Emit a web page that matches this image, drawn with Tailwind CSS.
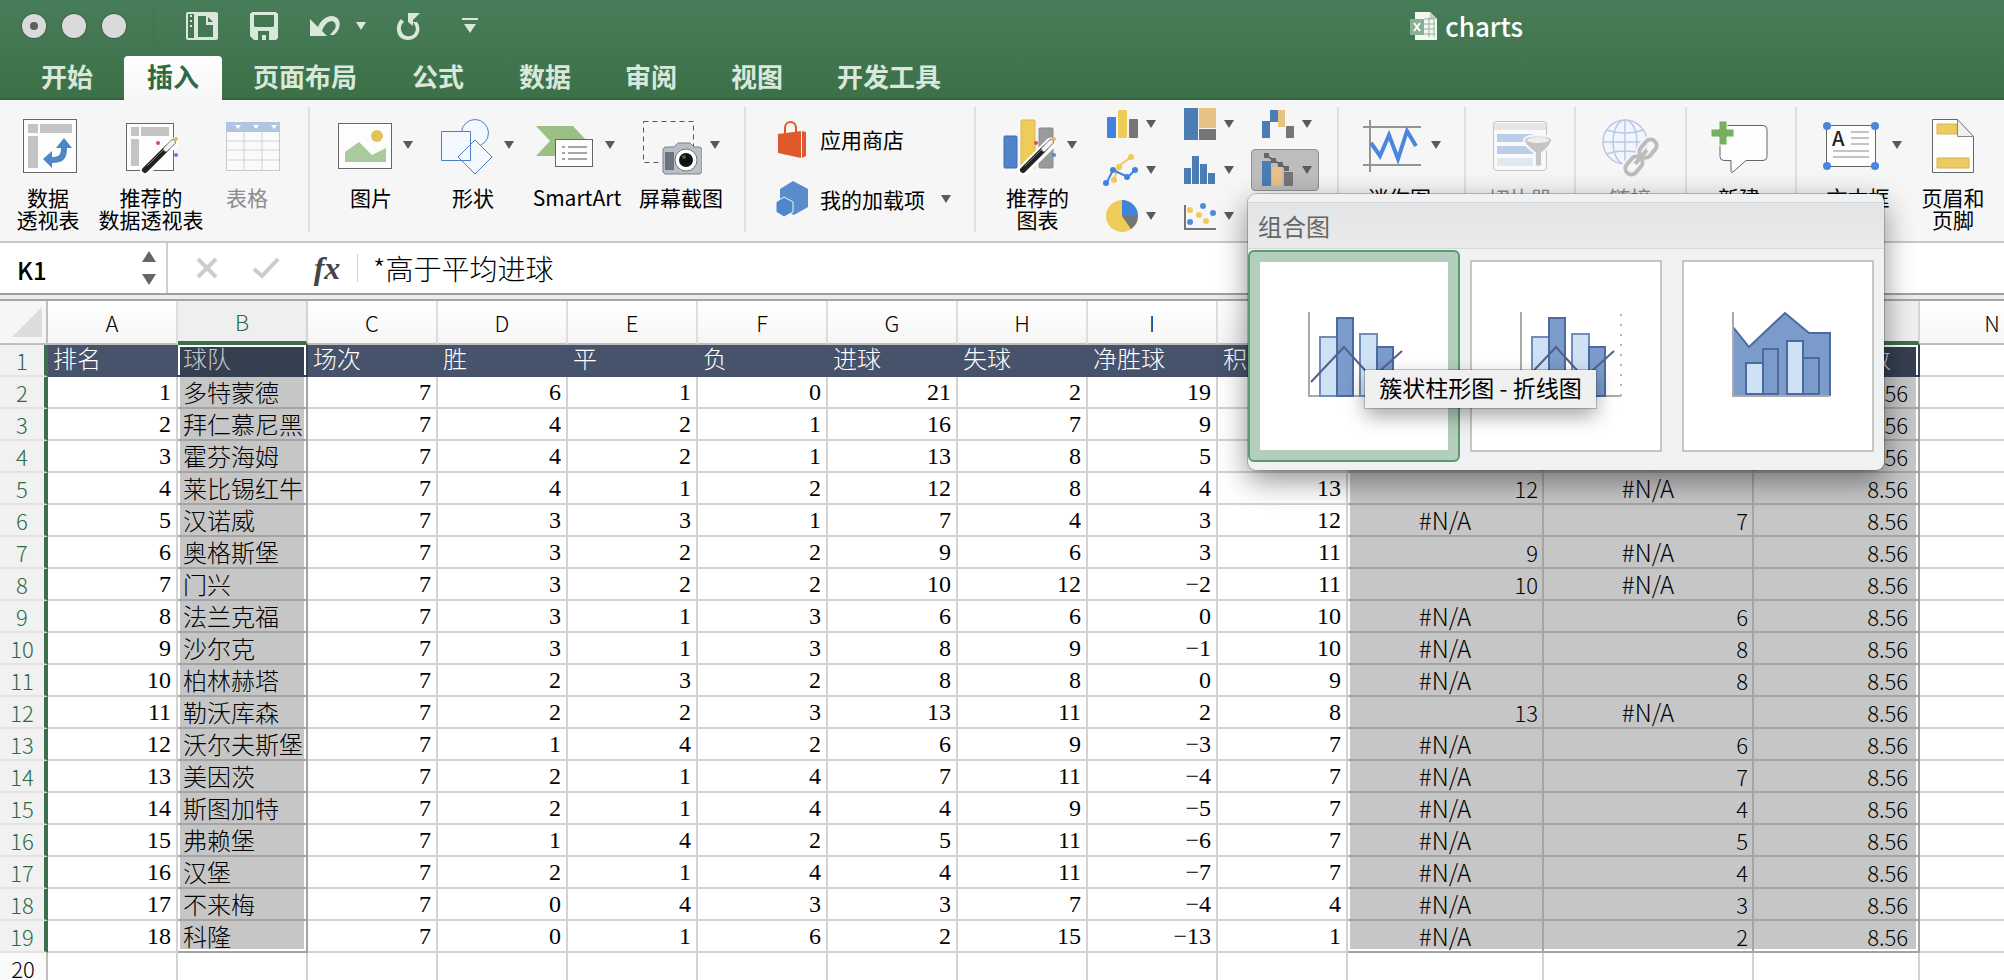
<!doctype html>
<html lang="zh-CN">
<head>
    <meta charset="UTF-8">
    <meta name="viewport" content="width=device-width, initial-scale=1.0">
    <title>charts</title>
    <script src="https://cdn.jsdelivr.net/npm/@tailwindcss/browser@4"></script>
</head>
<body class="flex flex-col h-screen overflow-hidden bg-white text-black font-['Noto_Sans_CJK_SC',sans-serif]">

<!-- shared icon parts -->
<svg class="hidden">
    <symbol id="caret" viewBox="0 0 10 8"><path d="M0 0h10L5 8z" fill="currentColor"/></symbol>
    <symbol id="wand" viewBox="0 0 40 40">
        <path d="M5 36L33 8" stroke="#fff" stroke-width="11" stroke-linecap="round"/>
        <path d="M5 35L27 13" stroke="#222" stroke-width="6" stroke-linecap="round"/>
        <path d="M7 31L24 14" stroke="#777" stroke-width="1"/>
        <path d="M26 14L33 7" stroke="#888" stroke-width="6" stroke-linecap="round"/>
        <path d="M26 14L33 7" stroke="#f4f4f4" stroke-width="4" stroke-linecap="round"/>
        <circle cx="18" cy="8" r="2" fill="#d8486a"/>
        <circle cx="36" cy="4" r="2" fill="#edb652"/>
        <circle cx="36" cy="20" r="2" fill="#5b82d8"/>
    </symbol>
</svg>

<header class="shrink-0 bg-linear-to-b from-[#487d59] to-[#3b7048] border-b-2 border-[#346440]">
    <div class="flex items-center h-[52px] pl-[22px] text-[#d9e8db]">
        <div class="flex gap-4">
            <button aria-label="关闭" class="flex items-center justify-center w-6 h-6 rounded-full bg-[#dadada] ring-1 ring-[#3a6446]"><span class="w-2 h-2 rounded-full bg-[#5e5e5e]"></span></button>
            <button aria-label="最小化" class="w-6 h-6 rounded-full bg-[#dadada] ring-1 ring-[#3a6446]"></button>
            <button aria-label="缩放" class="w-6 h-6 rounded-full bg-[#dadada] ring-1 ring-[#3a6446]"></button>
        </div>
        <div class="w-px h-8 ml-[27px] mr-8 bg-[#40724e]"></div>
        <button aria-label="边栏">
            <svg width="32" height="28" viewBox="0 0 32 28">
                <rect width="32" height="28" rx="2" fill="currentColor"/>
                <path d="M2 2h6v24H2zM12 4h8v9h7v12H12zM22 5l5 5h-5z" fill="#437853"/>
                <path d="M4 3h2v2H4zM4 8h2v2H4zM4 13h2v2H4z" fill="currentColor"/>
            </svg>
        </button>
        <button aria-label="保存" class="ml-8">
            <svg width="28" height="28" viewBox="0 0 28 28">
                <path d="M2 0h24l2 2v24l-2 2H4l-4-4V2z" fill="currentColor"/>
                <path d="M4 3h20v11l-1 1H5l-1-1zM8 19h11v9h-3v-5h-4v5H8z" fill="#437853"/>
            </svg>
        </button>
        <button aria-label="撤消" class="ml-8">
            <svg width="30" height="20" viewBox="0 0 30 20"><path d="M0 3v17h17l-5-5C14 9 18 5 22 5c4 1 5 6 2 9l-4 5h4c8-6 8-18-2-19-6 0-11 4-14 11z" fill="currentColor"/></svg>
        </button>
        <button aria-label="撤消列表" class="ml-4"><svg width="10" height="8"><use href="#caret"/></svg></button>
        <button aria-label="重做" class="ml-[30px]">
            <svg width="24" height="27" viewBox="0 0 24 27"><path d="M5 6C-1 12 0 21 5 25c6 4 16 2 18-6 1-4 0-7-2-10h-4c3 4 4 8 1 12-3 3-8 3-11 0-3-4-3-9 1-12zM12 0h12l-4 4-3 3v6l-5-4z" fill="currentColor"/></svg>
        </button>
        <button aria-label="自定义" class="ml-[42px]">
            <svg width="16" height="16" viewBox="0 0 16 16"><path d="M0 0h16v2H0zM2 6h12l-6 9z" fill="currentColor"/></svg>
        </button>
        <div class="flex items-center gap-2 ml-auto mr-[481px]">
            <svg width="27" height="28" viewBox="0 0 27 28">
                <path d="M5 0h15l7 7v21H5z" fill="#f4f8f4"/>
                <path d="M20 0l7 7h-7z" fill="#b9cfbe"/>
                <path d="M14 7h11M14 12h11M14 17h11M14 22h11M19 5v20M24 8v17" stroke="#8db398" stroke-width="1"/>
                <rect y="7" width="14" height="16" fill="#88b093"/>
                <path d="M4 11l6 8M10 11l-6 8" stroke="#fff" stroke-width="2"/>
            </svg>
            <h1 class="text-[26px] leading-8 font-medium text-white">charts</h1>
        </div>
    </div>
    <nav class="flex gap-2 mt-1 pl-[18px] text-[26px] leading-[38px] font-bold text-[#d9e8db]">
        <button class="h-[42px] px-[23px] pb-0.5">开始</button>
        <button class="h-11 -mb-0.5 px-[23px] pb-1 rounded-t bg-linear-to-b from-white to-[#f6f6f6] text-[#2c6a44]">插入</button>
        <button class="h-[42px] px-[23px] pb-0.5">页面布局</button>
        <button class="h-[42px] px-6 pb-0.5">公式</button>
        <button class="h-[42px] px-[23px] pb-0.5">数据</button>
        <button class="h-[42px] px-[23px] pb-0.5">审阅</button>
        <button class="h-[42px] px-[23px] pb-0.5">视图</button>
        <button class="h-[42px] px-[23px] pb-0.5">开发工具</button>
    </nav>
</header>

<!-- ribbon -->
<div class="flex shrink-0 h-[141px] pt-[7px] pb-[9px] bg-[#f6f6f6] text-[21px] leading-[22px] text-[#5a5a5a]">
    <div class="flex shrink-0 w-[310px] pl-2 border-r-2 border-[#e0e0e0]">
        <button class="flex flex-col items-center w-20 pt-3">
            <svg class="mb-[11px] ml-1" width="54" height="56" viewBox="0 0 54 56">
                <rect x=".5" y=".5" width="53" height="53" fill="#fdfdfd" stroke="#666"/>
                <path d="M5 5h10v9H5zM17 5h32v9H17zM5 17h10v32H5z" fill="#c4c4c4"/>
                <path d="M41 19l8 10h-5c0 10-3 15-15 15v5l-9-9 9-8v6c7 0 9-2 9-9h-5z" fill="#4f86c6"/>
            </svg>
            <span class="text-black">数据<br>透视表</span>
        </button>
        <button class="flex flex-col items-center w-[126px] pt-3">
            <svg class="mb-[11px] ml-1" width="56" height="56" viewBox="0 0 56 56">
                <rect x="1.500" y="4.500" width="47" height="47" fill="#fdfdfd" stroke="#666"/>
                <path d="M6 8h8v9H6zM16 8h28v9H16zM6 20h8v27H6z" fill="#c4c4c4"/>
                <use href="#wand" x="15" y="16" width="40" height="40"/>
            </svg>
            <span class="text-black whitespace-nowrap">推荐的<br>数据透视表</span>
        </button>
        <button disabled class="flex flex-col items-center w-[66px] pt-3">
            <svg class="mb-[11px] ml-3" width="54" height="56" viewBox="0 0 54 56">
                <rect x=".5" y="3.500" width="53" height="48" fill="#fafafa" stroke="#c6c9cf"/>
                <path d="M0 3h54v10H0z" fill="#afc5e2"/>
                <path d="M9 6h6l-3 4zM27 6h6l-3 4zM45 6h6l-3 4z" fill="#fff"/>
                <path d="M1 22h52M1 31h52M1 41h52M18 13v38M36 13v38" stroke="#d0d2d6"/>
            </svg>
            <span class="text-[#8c8c8c]">表格</span>
        </button>
    </div>

    <div class="flex shrink-0 w-[436px] pl-3 border-r-2 border-[#e0e0e0]">
        <button class="flex flex-col items-center w-[102px] pt-3">
            <span class="flex items-center gap-[11px] h-14 mb-[11px] ml-1">
                <svg width="54" height="56" viewBox="0 0 54 56">
                    <rect x=".5" y="4.500" width="53" height="45" fill="#fdfdfd" stroke="#666"/>
                    <circle cx="39" cy="17" r="6" fill="#e5c257"/>
                    <path d="M7 43V33l14-10 13 13 14-7v14z" fill="#a9ca9b"/>
                </svg>
                <svg class="mb-1" width="10" height="8"><use href="#caret"/></svg>
            </span>
            <span class="mr-1 text-black">图片</span>
        </button>
        <button class="flex flex-col items-center w-[102px] pt-3">
            <span class="flex items-center gap-2.5 h-14 mb-[11px] ml-1">
                <svg width="54" height="56" viewBox="0 0 54 56" fill="#f3f8fe" stroke="#4d7fc9">
                    <circle cx="35" cy="14" r="13.500"/>
                    <path d="M1.500 12.500h29v29h-29zM35 21l17 17-17 17-17-17z"/>
                </svg>
                <svg class="mb-1" width="10" height="8"><use href="#caret"/></svg>
            </span>
            <span class="mr-1 text-black">形状</span>
        </button>
        <button class="flex flex-col items-center w-[102px] pt-3">
            <span class="flex items-center gap-3 h-14 mb-[11px] mr-1">
                <svg width="58" height="56" viewBox="0 0 58 56">
                    <path d="M1 7h37l14 15-14 15H1l14-15z" fill="#9bbf84"/>
                    <rect x="20.500" y="20.500" width="37" height="27" fill="#fdfdfd" stroke="#666"/>
                    <path d="M27 28h3M33 28h19M27 34h3M33 34h19M27 40h3M33 40h19" stroke="#a5a5a5" stroke-width="2"/>
                </svg>
                <svg class="mb-1" width="10" height="8"><use href="#caret"/></svg>
            </span>
            <span class="text-black">SmartArt</span>
        </button>
        <button class="flex flex-col items-center w-[106px] pt-3">
            <span class="flex items-center gap-2 h-14 mb-[11px]">
                <svg width="60" height="56" viewBox="0 0 60 56">
                    <rect x="1.500" y="2.500" width="50" height="41" fill="none" stroke="#555" stroke-dasharray="5 4"/>
                    <path d="M23 28h9l4-4h12l4 4h6l2 2v23l-2 2H23l-2-2V30z" fill="#b9bdc6" stroke="#7b808c"/>
                    <path d="M23 33h9v18h-9z" fill="#6c7282"/>
                    <circle cx="44" cy="41" r="11" fill="#fff" stroke="#777"/>
                    <circle cx="44" cy="41" r="7" fill="#111"/>
                    <circle cx="42" cy="38" r="2" fill="#555"/>
                </svg>
                <svg class="mb-1" width="10" height="8"><use href="#caret"/></svg>
            </span>
            <span class="text-black whitespace-nowrap">屏幕截图</span>
        </button>
    </div>

    <div class="flex flex-col shrink-0 w-[230px] pl-[30px] pt-0.5 border-r-2 border-[#e0e0e0]">
        <button class="flex items-center gap-3 h-[60px]">
            <svg width="32" height="38" viewBox="0 0 32 38">
                <path d="M9 14V8c0-8 11-8 11 0v6" fill="none" stroke="#e0572a" stroke-width="2"/>
                <path d="M2 14l23-3v27L2 33z" fill="#e0592b"/>
                <path d="M26 11l4 1v24l-4 2z" fill="#e0592b"/>
            </svg>
            <span class="text-black">应用商店</span>
        </button>
        <button class="flex items-center gap-3 h-[60px]">
            <svg width="32" height="36" viewBox="0 0 32 36">
                <path d="M17 0l15 8v18l-14 8-14-8V8z" fill="#5a8ccb"/>
                <path d="M8 16l9 5v10l-9 5-8-5V21z" fill="#4f86cc" stroke="#f6f6f6" stroke-width="1"/>
            </svg>
            <span class="text-black">我的加载项</span>
            <svg class="ml-1" width="10" height="8"><use href="#caret"/></svg>
        </button>
    </div>

    <div class="flex shrink-0 w-[363px] pl-3 border-r-2 border-[#e0e0e0]">
        <button class="flex flex-col items-center w-[107px] pt-3">
            <span class="flex items-center gap-2.5 h-14 mb-[11px] mr-1">
                <svg width="54" height="56" viewBox="0 0 54 56">
                    <rect x="1" y="17" width="13" height="32" rx="1" fill="#4f84cb" stroke="#3f6fb5"/>
                    <rect x="18" y="1" width="14" height="48" rx="1" fill="#efcb5a" stroke="#dcb748"/>
                    <rect x="36" y="9" width="14" height="40" rx="1" fill="#9a9a9a" stroke="#8b8b8b"/>
                    <use href="#wand" x="15" y="16" width="40" height="40"/>
                </svg>
                <svg class="mb-1" width="10" height="8"><use href="#caret"/></svg>
            </span>
            <span class="mr-2 text-black">推荐的<br>图表</span>
        </button>
        <div class="grid grid-cols-[68px_68px_68px] gap-x-2.5 gap-y-1 self-center">
            <button aria-label="柱形图" class="flex items-center gap-2 h-[42px] pl-[11px]">
                <svg width="32" height="32" viewBox="0 0 32 32"><rect x="1" y="9" width="9" height="21" rx="1" fill="#3f83de"/><rect x="12" y="2" width="9" height="28" rx="1" fill="#efcb5a"/><rect x="23" y="11" width="9" height="19" rx="1" fill="#757575"/></svg>
                <svg width="10" height="8"><use href="#caret"/></svg>
            </button>
            <button aria-label="层次结构图" class="flex items-center gap-2 h-[42px] pl-[11px]">
                <svg width="32" height="32" viewBox="0 0 32 32"><path d="M0 0h14v32H0z" fill="#4b7cb3"/><path d="M15 0h17v20H15z" fill="#e8c285"/><path d="M15 21h17v11H15z" fill="#757575"/></svg>
                <svg width="10" height="8"><use href="#caret"/></svg>
            </button>
            <button aria-label="瀑布图" class="flex items-center gap-2 h-[42px] pl-[11px]">
                <svg width="32" height="32" viewBox="0 0 32 32"><path d="M0 13h8v17H0zM8 2h8v12H8z" fill="#4b7cb3"/><path d="M16 2h7v17h-7z" fill="#e8c285"/><path d="M24 18h8v12h-8z" fill="#757575"/></svg>
                <svg width="10" height="8"><use href="#caret"/></svg>
            </button>
            <button aria-label="折线图" class="flex items-center gap-2 h-[42px] pl-[8px]">
                <svg width="35" height="32" viewBox="0 0 35 32"><path d="M11 25l5-13L28 3" fill="none" stroke="#efcb5a" stroke-width="2"/><g fill="#efcb5a"><circle cx="11" cy="26" r="3"/><circle cx="16" cy="13" r="3"/><circle cx="28" cy="3" r="3"/></g><path d="M3 30l7-14 15 7 8-8" fill="none" stroke="#3f83de" stroke-width="2"/><g fill="#3f83de"><circle cx="3" cy="29" r="3"/><circle cx="10" cy="16" r="3"/><circle cx="24" cy="23" r="3"/><circle cx="32" cy="16" r="3"/></g></svg>
                <svg width="10" height="8"><use href="#caret"/></svg>
            </button>
            <button aria-label="统计图" class="flex items-center gap-2 h-[42px] pl-[11px]">
                <svg width="32" height="32" viewBox="0 0 32 32"><path d="M0 14h7v16H0zM8 2h7v28H8zM16 10h7v20h-7zM24 19h7v11h-7z" fill="#4b7cb3"/></svg>
                <svg width="10" height="8"><use href="#caret"/></svg>
            </button>
            <div class="relative">
                <button aria-label="组合图" class="flex items-center gap-2 w-[68px] h-[42px] pl-2.5 rounded border border-[#909090] bg-[#bdbdbd]">
                    <svg width="32" height="34" viewBox="0 0 32 34"><path d="M0 8h9v25H0z" fill="#4b7cb3"/><path d="M10 14h10v19H10z" fill="#e8c285"/><path d="M22 19h9v14h-9z" fill="#757575"/><path d="M5 3l19 12" fill="none" stroke="#666" stroke-width="2"/><path d="M2 0h5v5H2zM9 5h5v5H9zM16 9h5v5h-5zM22 13h5v5h-5z" fill="#666"/></svg>
                    <svg width="10" height="8"><use href="#caret"/></svg>
                </button>

                <!-- combo chart gallery -->
                <div class="absolute z-20 left-[-3px] top-[45px] w-[636px] h-[276px] pt-2 rounded-lg bg-[#eff1f2] ring-1 ring-black/20 shadow-[0_10px_30px_rgba(0,0,0,0.45)]">
                    <h2 class="h-[47px] pl-2.5 border-y border-[#d6d8d9] bg-linear-to-b from-[#e2e4e5] to-[#e9eaeb] text-2xl leading-[46px] text-[#666]">组合图</h2>
                    <div class="flex mt-px">
                        <button aria-label="簇状柱形图 - 折线图" class="w-[212px] h-[212px] p-2.5 rounded-md border-2 border-[#5b9a6c] bg-[#b4cebe]">
                            <span class="flex items-center justify-center h-full pb-1 bg-white">
                                <svg class="overflow-visible" width="92" height="88" viewBox="0 0 92 88">
                                    <path d="M1 2v84h93" fill="none" stroke="#aaa" stroke-width="2"/>
                                    <path d="M12 27h17v59H12zM52 24h17v62H52z" fill="#cfe2f5" stroke="#6f8db8" stroke-width="2"/>
                                    <path d="M29 8h16v78H29zM69 37h16v49H69z" fill="#7b9bcb" stroke="#4c69a0" stroke-width="2"/>
                                    <path d="M3 72l33-35 28 31 30-27" fill="none" stroke="#525f90" stroke-width="2"/>
                                </svg>
                            </span>
                        </button>
                        <button aria-label="簇状柱形图 - 次坐标轴上的折线图" class="w-[212px] h-[212px] p-2.5">
                            <span class="flex items-center justify-center h-full pb-1 border-2 border-[#c6c6c6] bg-white">
                                <svg class="overflow-visible" width="92" height="88" viewBox="0 0 92 88">
                                    <path d="M1 2v84h100" fill="none" stroke="#aaa" stroke-width="2"/>
                                    <path d="M101 4v82" stroke="#b5b5b5" stroke-width="2" stroke-dasharray="2 8"/>
                                    <path d="M12 27h17v59H12zM52 24h17v62H52z" fill="#cfe2f5" stroke="#6f8db8" stroke-width="2"/>
                                    <path d="M29 8h16v78H29zM69 37h16v49H69z" fill="#7b9bcb" stroke="#4c69a0" stroke-width="2"/>
                                    <path d="M3 72l33-35 28 31 30-27" fill="none" stroke="#525f90" stroke-width="2"/>
                                </svg>
                            </span>
                        </button>
                        <button aria-label="堆积面积图 - 簇状柱形图" class="w-[212px] h-[212px] p-2.5">
                            <span class="flex items-center justify-center h-full pb-1 border-2 border-[#c6c6c6] bg-white">
                                <svg class="overflow-visible" width="92" height="88" viewBox="0 0 92 88">
                                    <path d="M1 17l16 20L53 3l24 20h21v63H1z" fill="#7b9bcb"/>
                                    <path d="M1 17l16 20L53 3l24 20h21v63" fill="none" stroke="#4c69a0" stroke-width="2"/>
                                    <path d="M1 2v84h97" fill="none" stroke="#aaa" stroke-width="2"/>
                                    <path d="M14 53h17v31H14zM55 31h16v53H55z" fill="#cfe2f5" stroke="#4c69a0" stroke-width="2"/>
                                    <path d="M31 39h15v45H31zM71 48h16v36H71z" fill="#7b9bcb" stroke="#4c69a0" stroke-width="2"/>
                                </svg>
                            </span>
                        </button>
                    </div>
                    <div role="tooltip" class="absolute left-[117px] top-44 w-[231px] h-[38px] bg-[#f0f0f0] ring-1 ring-black/20 shadow-[0_8px_20px_rgba(0,0,0,0.35)] text-center text-[23px] leading-[34px] text-black whitespace-nowrap">簇状柱形图 - 折线图</div>
                </div>
            </div>
            <button aria-label="饼图" class="flex items-center gap-2 h-[42px] pl-[11px]">
                <svg width="32" height="32" viewBox="0 0 32 32"><circle cx="16" cy="16" r="16" fill="#efcb5a"/><path d="M16 16V0a16 16 0 0 1 16 16z" fill="#3f83de"/><path d="M16 16h16a16 16 0 0 1-7 13z" fill="#757575"/></svg>
                <svg width="10" height="8"><use href="#caret"/></svg>
            </button>
            <button aria-label="散点图" class="flex items-center gap-2 h-[42px] pl-[11px]">
                <svg width="32" height="32" viewBox="0 0 32 32"><path d="M1 5v24h31" fill="none" stroke="#757575" stroke-width="2"/><g fill="#efcb5a"><circle cx="6" cy="10" r="3"/><circle cx="15" cy="15" r="3"/><circle cx="22" cy="21" r="3"/></g><g fill="#4f8bd8"><circle cx="19" cy="6" r="3"/><circle cx="29" cy="13" r="3"/><circle cx="6" cy="22" r="3"/></g></svg>
                <svg width="10" height="8"><use href="#caret"/></svg>
            </button>
        </div>
    </div>

    <div class="flex justify-center shrink-0 w-[127px] border-r-2 border-[#e0e0e0]">
        <button class="flex flex-col items-center pt-3">
            <span class="flex items-center gap-2.5 h-14 mb-[11px]">
                <svg width="58" height="56" viewBox="0 0 58 56" fill="none"><path d="M7 1v52M0 8h58M0 46h58" stroke="#949494" stroke-width="2"/><path d="M8 24l9 13 9-21 9 24 9-28 9 15" stroke="#4a86dc" stroke-width="4"/></svg>
                <svg class="mb-1" width="10" height="8"><use href="#caret"/></svg>
            </span>
            <span class="mr-1 text-black">迷你图</span>
        </button>
    </div>
    <div class="flex justify-center shrink-0 w-[110px] border-r-2 border-[#e0e0e0]">
        <button disabled class="flex flex-col items-center pt-3">
            <svg class="mb-[11px] ml-1" width="60" height="56" viewBox="0 0 60 56">
                <rect x="1.500" y="2.500" width="53" height="49" rx="3" fill="#fafafa" stroke="#c4c4c4"/>
                <path d="M2 4h52v7H2z" fill="#e6e6e6"/>
                <path d="M5 15h36v8H5zM5 27h36v8H5z" fill="#b9cfe8"/>
                <path d="M5 39h36v8H5z" fill="#e1e8f0"/>
                <path d="M32 21c0-6 28-6 28 0 0 5-5 9-10 13v12c0 2-7 2-7 0V34c-5-4-11-8-11-13z" fill="#c5c5c5" stroke="#f6f6f6" stroke-width="2"/>
                <ellipse cx="46" cy="21" rx="11" ry="3" fill="#eee"/>
            </svg>
            <span class="text-[#8c8c8c]">切片器</span>
        </button>
    </div>
    <div class="flex justify-center shrink-0 w-[111px] border-r-2 border-[#e0e0e0]">
        <button disabled class="flex flex-col items-center pt-3">
            <svg class="mb-[9px]" width="58" height="58" viewBox="0 0 58 58" fill="none">
                <g stroke="#bcc7e4" stroke-width="1.500"><circle cx="23" cy="23" r="22" fill="#f1f5fc"/><ellipse cx="23" cy="23" rx="12" ry="22"/><path d="M23 1v44M1 23h44M5 11c10 4 26 4 36 0M5 35c10-4 26-4 36 0"/></g>
                <g transform="rotate(-50 39 38)" stroke="#f6f6f6" stroke-width="8"><rect x="18" y="32" width="20" height="12" rx="6"/><rect x="40" y="32" width="20" height="12" rx="6"/></g>
                <g transform="rotate(-50 39 38)" stroke="#bcbcbc" stroke-width="4"><rect x="18" y="32" width="20" height="12" rx="6"/><rect x="40" y="32" width="20" height="12" rx="6"/><path d="M30 38h18"/></g>
            </svg>
            <span class="text-[#8c8c8c]">链接</span>
        </button>
    </div>
    <div class="flex justify-center shrink-0 w-[110px] border-r-2 border-[#e0e0e0]">
        <button class="flex flex-col items-center pt-3">
            <svg class="mb-[11px] mr-1" width="58" height="56" viewBox="0 0 58 56">
                <path d="M14 6.500h39q4 0 4 4v27q0 4-4 4H36L23 53q-2 1-2-1V41.500h-7q-4 0-4-4v-27q0-4 4-4z" fill="#fdfdfd" stroke="#666"/>
                <path d="M9 2h8v8h7v8h-7v8H9v-8H1v-8h8z" fill="#74b05d" stroke="#f6f6f6"/>
            </svg>
            <span class="mr-1 text-black">新建</span>
        </button>
    </div>
    <div class="flex shrink-0 pl-[9px]">
        <button class="flex flex-col items-center w-28 pt-3">
            <span class="flex items-center gap-3 h-14 mb-[11px]">
                <svg width="58" height="56" viewBox="0 0 58 56">
                    <rect x="4.500" y="6.500" width="49" height="41" fill="#fdfdfd" stroke="#666"/>
                    <path d="M29 13h18M29 19h18M29 25h18M11 32h36M11 38h36" stroke="#c4c4c4" stroke-width="2"/>
                    <text x="10" y="27" font-size="20" font-weight="500" fill="#222">A</text>
                    <g fill="#4a86dc"><circle cx="5" cy="7" r="4"/><circle cx="53" cy="7" r="4"/><circle cx="5" cy="47" r="4"/><circle cx="53" cy="47" r="4"/></g>
                </svg>
                <svg class="mb-1" width="10" height="8"><use href="#caret"/></svg>
            </span>
            <span class="mr-2 text-black">文本框</span>
        </button>
        <button class="flex flex-col items-center w-[70px] pt-3">
            <svg class="mb-[11px]" width="42" height="56" viewBox="0 0 42 56">
                <path d="M.5.500h25l16 17v36H.500z" fill="#fdfdfd" stroke="#666"/>
                <path d="M5 5h20v10H5zM5 39h32v10H5z" fill="#eccb62" stroke="#d9b44a"/>
                <path d="M25.500.500v17h16z" fill="#f0f0f0" stroke="#888"/>
            </svg>
            <span class="text-black">页眉和<br>页脚</span>
        </button>
    </div>
</div>

<!-- formula bar -->
<div class="flex items-center shrink-0 h-[54px] border-y-2 border-t-[#c8c8c8] border-b-[#a0a0a0] bg-white">
    <div class="flex items-center w-[168px] h-full pl-[17px] border-r-2 border-[#cfcfcf]">
        <input aria-label="名称框" value="K1" class="w-[125px] pt-1 text-2xl font-medium outline-none">
        <svg width="14" height="34" viewBox="0 0 14 34"><path d="M7 0l7 11H0zM7 34l7-11H0z" fill="#666"/></svg>
    </div>
    <button aria-label="取消" class="ml-7"><svg width="22" height="22" viewBox="0 0 22 22"><path d="M2 2l18 18M20 2L2 20" stroke="#ccc" stroke-width="4"/></svg></button>
    <button aria-label="输入" class="ml-[34px]"><svg width="28" height="22" viewBox="0 0 28 22"><path d="M2 12l8 7L26 2" fill="none" stroke="#ccc" stroke-width="4"/></svg></button>
    <button aria-label="插入函数" class="w-[30px] h-10 ml-8 font-['Liberation_Serif',serif] italic font-bold text-[32px] leading-9 text-[#444]">fx</button>
    <div class="w-px h-7 mx-[15px] bg-[#d5d5d5]"></div>
    <input aria-label="编辑栏" value="*高于平均进球" class="flex-1 font-light text-[28px] outline-none">
</div>
<div class="shrink-0 h-1.5 bg-[#ececec] border-b-2 border-[#a6a6a6]"></div>

<!-- sheet -->
<main class="flex-1 overflow-hidden">
    <table class="table-fixed w-[2066px] min-w-full border-separate border-spacing-0">
        <colgroup>
            <col class="w-12">
            <col class="w-[130px]"><col class="w-[130px]"><col class="w-[130px]"><col class="w-[130px]"><col class="w-[130px]">
            <col class="w-[130px]"><col class="w-[130px]"><col class="w-[130px]"><col class="w-[130px]"><col class="w-[130px]">
            <col class="w-[196px]"><col class="w-[210px]"><col class="w-[166px]"><col>
        </colgroup>
        <thead><tr id="letters"></tr></thead>
        <tbody id="rows"></tbody>
    </table>
</main>

<script>
    var letters = 'ABCDEFGHIJKLMN'.split('');
    var titles = ['排名', '球队', '场次', '胜', '平', '负', '进球', '失球', '净胜球', '积分', '*高于平均进球', '*低于平均进球', '*平均进球数', ''];
    // team, won, drawn, lost, goals for, goals against, points
    var teams = [
        ['多特蒙德', 6, 1, 0, 21, 2, 19],
        ['拜仁慕尼黑', 4, 2, 1, 16, 7, 14],
        ['霍芬海姆', 4, 2, 1, 13, 8, 14],
        ['莱比锡红牛', 4, 1, 2, 12, 8, 13],
        ['汉诺威', 3, 3, 1, 7, 4, 12],
        ['奥格斯堡', 3, 2, 2, 9, 6, 11],
        ['门兴', 3, 2, 2, 10, 12, 11],
        ['法兰克福', 3, 1, 3, 6, 6, 10],
        ['沙尔克', 3, 1, 3, 8, 9, 10],
        ['柏林赫塔', 2, 3, 2, 8, 8, 9],
        ['勒沃库森', 2, 2, 3, 13, 11, 8],
        ['沃尔夫斯堡', 1, 4, 2, 6, 9, 7],
        ['美因茨', 2, 1, 4, 7, 11, 7],
        ['斯图加特', 2, 1, 4, 4, 9, 7],
        ['弗赖堡', 1, 4, 2, 5, 11, 7],
        ['汉堡', 2, 1, 4, 4, 11, 7],
        ['不来梅', 0, 4, 3, 3, 7, 4],
        ['科隆', 0, 1, 6, 2, 15, 1]
    ];
    var average = 8.56;

    function selected(c) {
        return c === 1 || (c >= 10 && c <= 12);
    }

    // white inner frame of the two selected ranges
    function frame(c, r) {
        var left = c === 1 || c === 10, right = c === 1 || c === 12;
        if (r === 1 && left && right) return ' shadow-[inset_2px_0_0_#fff,inset_-2px_0_0_#fff,inset_0_2px_0_#fff]';
        if (r === 1 && left) return ' shadow-[inset_2px_0_0_#fff,inset_0_2px_0_#fff]';
        if (r === 1 && right) return ' shadow-[inset_-2px_0_0_#fff,inset_0_2px_0_#fff]';
        if (r === 1) return ' shadow-[inset_0_2px_0_#fff]';
        if (r === 19 && left && right) return ' shadow-[inset_2px_0_0_#fff,inset_-2px_0_0_#fff,inset_0_-2px_0_#fff]';
        if (r === 19 && left) return ' shadow-[inset_2px_0_0_#fff,inset_0_-2px_0_#fff]';
        if (r === 19 && right) return ' shadow-[inset_-2px_0_0_#fff,inset_0_-2px_0_#fff]';
        if (r === 19) return ' shadow-[inset_0_-2px_0_#fff]';
        if (left && right) return ' shadow-[inset_2px_0_0_#fff,inset_-2px_0_0_#fff]';
        if (left) return ' shadow-[inset_2px_0_0_#fff]';
        if (right) return ' shadow-[inset_-2px_0_0_#fff]';
        return '';
    }

    var base = 'h-8 p-0 border-r-2 border-b-2 whitespace-nowrap leading-[30px]';

    var head = '<td class="h-11 p-0 border-r-2 border-b-2 border-[#c0c0c0] bg-[#f6f6f6]"><svg class="ml-3" width="30" height="30" viewBox="0 0 30 30"><path d="M30 0v30H0z" fill="#dcdcdc"/></svg></td>';
    letters.forEach(function (l, c) {
        head += '<th scope="col" class="h-11 p-0 border-r-2 text-[22px] font-light ' +
            (selected(c) ? 'border-b-4 border-r-[#d4d4d4] border-b-[#3b6f4b] bg-[#efefef] text-[#2c6a44]' : 'border-b-2 border-r-[#dedede] border-b-[#bdbdbd] bg-linear-to-b from-white to-[#f6f6f6]') + '">' + l + '</th>';
    });
    document.getElementById('letters').innerHTML = head;

    function cell(c, r, v) {
        var cls = base;
        if (r === 1 && c < 13) {
            cls += " pl-[5px] text-left text-2xl leading-[30px] font-light font-['Liberation_Serif','Noto_Sans_CJK_SC',serif]";
            cls += selected(c) ? ' bg-[#353f50] border-[#353f50] text-[#c3c8d0]' + frame(c, r) : ' bg-[#47536a] border-[#47536a] text-white';
            return '<td class="' + cls + '">' + v + '</td>';
        }
        if (selected(c) && r < 20) {
            cls += ' bg-[#c6c6c6] border-[#a4a4a4]' + frame(c, r);
            if (c === 1) cls += ' pl-[5px] text-left text-2xl leading-[30px] font-light';
            else if (v === '#N/A') cls += ' text-center text-2xl leading-[30px] font-light';
            else if (c === 12) cls += ' pr-2.5 text-right text-[22px] leading-[30px] font-light';
            else cls += ' pr-1 text-right text-[22px] leading-[30px] font-light';
        } else {
            cls += " border-[#d2d2d2] pr-[5px] text-right text-2xl leading-[30px] font-['Liberation_Serif',serif]";
        }
        return '<td class="' + cls + '">' + v + '</td>';
    }

    var html = '';
    for (var r = 1; r <= 20; r++) {
        var row;
        if (r === 1) {
            row = titles;
        } else if (r === 20) {
            row = letters.map(function () { return ''; });
        } else {
            var t = teams[r - 2];
            var diff = t[4] - t[5];
            row = [r - 1, t[0], 7, t[1], t[2], t[3], t[4], t[5], diff < 0 ? '−' + (-diff) : diff, t[6],
                t[4] > average ? t[4] : '#N/A', t[4] > average ? '#N/A' : t[4], average, ''];
        }
        html += '<tr><th scope="row" class="h-8 p-0 border-b-2 border-b-[#e2e2e2] text-[22px] leading-[30px] font-light ' +
            (r < 20 ? 'border-r-4 border-r-[#3b6f4b] bg-[#f1f1f1] text-[#2c6a44]' : 'border-r-2 border-r-[#c0c0c0] bg-[#fafafa]') + '">' + r + '</th>';
        row.forEach(function (v, c) { html += cell(c, r, v); });
        html += '</tr>';
    }
    document.getElementById('rows').innerHTML = html;
</script>
</body>
</html>
